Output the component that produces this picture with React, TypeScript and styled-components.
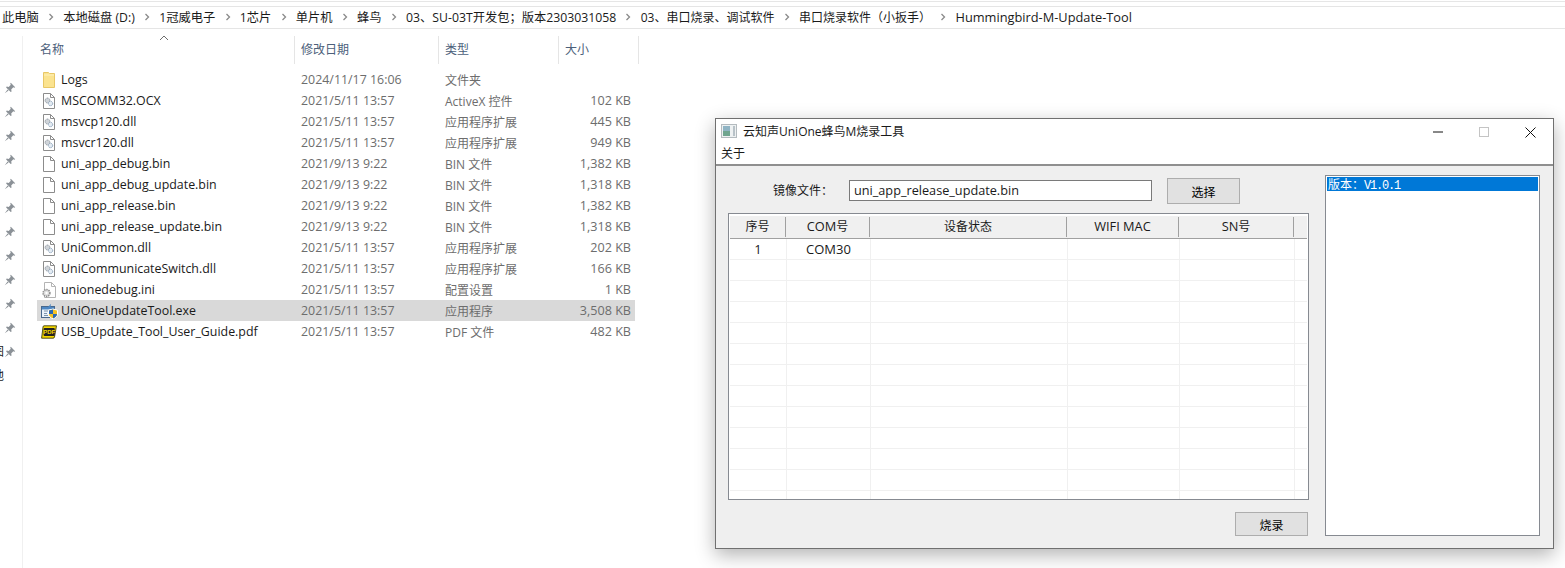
import React from "react";
import styled, { createGlobalStyle } from "styled-components";

const Global = createGlobalStyle`
  html, body { margin: 0; padding: 0; background: #fff; overflow: hidden; }
  body { font-family: "Open Sans", "Noto Sans CJK SC", sans-serif; font-size: 12px; color: #1a1a1a; }
  * { box-sizing: border-box; }
`;

const Page = styled.div`
  position: relative;
  width: 1565px;
  height: 568px;
  overflow: hidden;
`;

const TopEdge = styled.div`
  height: 6px;
  border-top: 1px solid #fff;
  box-shadow: inset 0 2px 0 -1px #e6e6e6;
`;

const Address = styled.nav`
  height: 23px;
  display: flex;
  align-items: center;
  gap: 9.25px;
  padding: 0 0 2px 2px;
  border-top: 1px solid #e5e5e5;
  border-bottom: 1px solid #e5e5e5;
  white-space: nowrap;
  color: #1a1a1a;
`;

const Crumb = styled.span<{ $size: number }>`
  font-size: ${(p) => p.$size}px;
`;

const Main = styled.div`
  display: flex;
  margin-top: 7px;
  height: 532px;
`;

const Sidebar = styled.aside`
  position: relative;
  width: 23px;
  flex: none;
  border-right: 1px solid #f0f0f0;
  padding: 46px 0 0 4px;
  display: flex;
  flex-direction: column;
  gap: 12px;
  overflow: hidden;
`;

const ClippedLabel = styled.span<{ $top: number }>`
  position: absolute;
  left: -8px;
  top: ${(p) => p.$top}px;
  font-size: 12px;
  line-height: 14px;
  color: #1a1a1a;
`;

const Files = styled.section`
  padding-left: 14px;
`;

const HeaderRow = styled.div`
  display: flex;
  height: 28px;
  margin-bottom: 5px;
  position: relative;
`;

const HeaderCell = styled.div<{ $w: number }>`
  width: ${(p) => p.$w}px;
  flex: none;
  display: flex;
  align-items: center;
  padding: 0 0 2px 6px;
  border-right: 1px solid #e5e5e5;
  color: #4c607a;
`;

const HeaderName = styled.span`
  margin-left: -3px;
`;

const SortCaret = styled.svg`
  position: absolute;
  left: 122px;
  top: -1px;
`;

const FileRow = styled.div<{ $selected?: boolean }>`
  display: flex;
  align-items: center;
  height: 21px;
  width: 598px;
  background: ${(p) => (p.$selected ? "#d9d9d9" : "transparent")};
  white-space: nowrap;
`;

const IconSlot = styled.span`
  width: 24px;
  flex: none;
  display: flex;
  justify-content: flex-start;
  padding-left: 4px;
`;

const NameCell = styled.span`
  width: 240px;
  flex: none;
  color: #1a1a1a;
  font-size: 12.4px;
`;

const MetaCell = styled.span<{ $w: number; $size: number }>`
  width: ${(p) => p.$w}px;
  flex: none;
  color: #6d6d6d;
  font-size: ${(p) => p.$size}px;
`;

const SizeCell = styled.span`
  width: 66px;
  flex: none;
  text-align: right;
  color: #6d6d6d;
  font-size: 12.6px;
`;

const Win = styled.div`
  position: absolute;
  left: 715px;
  top: 118px;
  width: 839px;
  height: 431px;
  border: 1px solid #707070;
  background: #efefef;
  box-shadow: 0 6px 18px rgba(0, 0, 0, 0.3);
  font-family: "Noto Sans CJK SC", "Open Sans", sans-serif;
  display: flex;
  flex-direction: column;
`;

const Chrome = styled.header`
  height: 47px;
  flex: none;
  background: #fff;
  border-bottom: 2px solid #8f8f8f;
`;

const TitleBar = styled.div`
  height: 24px;
  display: flex;
  align-items: center;
  padding-left: 5px;
  gap: 6px;
  color: #1a1a1a;
`;

const TitleText = styled.span`
  flex: 1;
  font-size: 12px;
  font-family: "Open Sans", "Noto Sans CJK SC", sans-serif;
`;

const CaptionGroup = styled.div`
  display: flex;
  margin-top: 2px;
`;

const CaptionBtn = styled.span`
  width: 46px;
  height: 24px;
  display: flex;
  align-items: center;
  justify-content: center;
`;

const MenuBar = styled.div`
  height: 21px;
  padding: 0 5px;
  font-size: 12px;
  line-height: 19px;
`;

const Body = styled.div`
  flex: 1;
  display: flex;
  gap: 16px;
  padding: 9px 13px 12px 12px;
`;

const LeftCol = styled.div`
  width: 581px;
  flex: none;
  display: flex;
  flex-direction: column;
  padding-top: 3px;
`;

const FilePicker = styled.div`
  display: flex;
  align-items: flex-start;
  height: 26px;
  padding-left: 45px;
`;

const PickerLabel = styled.label`
  width: 76px;
  flex: none;
  font-size: 12px;
  line-height: 24px;
`;

const PathField = styled.div`
  width: 303px;
  height: 21px;
  margin-top: 2px;
  flex: none;
  background: #fff;
  border: 1px solid #7a7a7a;
  padding-left: 4px;
  line-height: 18px;
  font-size: 12.7px;
  font-family: "Open Sans", "Noto Sans CJK SC", sans-serif;
`;

const ActionButton = styled.button<{ $h: number }>`
  width: 73px;
  height: ${(p) => p.$h}px;
  flex: none;
  background: #e1e1e1;
  border: 1px solid #adadad;
  color: #000;
  font: 12px "Noto Sans CJK SC", sans-serif;
  padding: 0;
`;

const PickButton = styled(ActionButton)`
  margin-left: 15px;
`;

const BurnRow = styled.div`
  display: flex;
  justify-content: flex-end;
  margin-top: 12px;
  padding-right: 1px;
`;

const Table = styled.div`
  height: 287px;
  margin-top: 9px;
  border: 1px solid #868a91;
  background: #fff;
  overflow: hidden;
  padding: 2px 1px 0;
`;

const THead = styled.div`
  display: flex;
  height: 23px;
  width: 577px;
  background: #f0f0f0;
  border-bottom: 1px solid #a0a0a0;
`;

const TH = styled.div<{ $w: number; $last?: boolean }>`
  width: ${(p) => p.$w}px;
  flex: none;
  height: 20px;
  margin-top: 1px;
  padding-bottom: 3px;
  display: flex;
  align-items: center;
  justify-content: center;
  font-size: 12px;
  border-right: ${(p) => (p.$last ? "0" : "1px solid #a0a0a0")};
`;

const LatinHead = styled.span`
  font-family: "Open Sans", sans-serif;
  font-size: 12.8px;
`;

const TRow = styled.div`
  display: flex;
  height: 21px;
  width: 577px;
  border-bottom: 1px solid #f0f0f0;
`;

const TD = styled.div<{ $w: number; $last?: boolean }>`
  width: ${(p) => p.$w}px;
  flex: none;
  display: flex;
  align-items: center;
  justify-content: center;
  font-size: 13px;
  font-family: "Open Sans", "Noto Sans CJK SC", sans-serif;
  border-right: ${(p) => (p.$last ? "0" : "1px solid #f0f0f0")};
`;

const VersionList = styled.div`
  width: 215px;
  flex: none;
  background: #fff;
  border: 1px solid #868a91;
  padding: 1px;
`;

const VersionItem = styled.div`
  height: 14px;
  background: #0078d7;
  color: #fff;
  font-size: 12px;
  line-height: 14px;
  padding-left: 1px;
  font-family: "Noto Sans CJK SC", monospace;
`;

const VersionNumber = styled.span`
  font-family: "Liberation Mono", monospace;
  letter-spacing: -1.2px;
`;

const Chevron = () => (
  <svg width="6" height="8" viewBox="0 0 6 8" style={{ flex: "none" }}>
    <path d="M1.5 1 L4.5 4 L1.5 7" fill="none" stroke="#8a8a8a" strokeWidth="1.3" />
  </svg>
);

const Pin = () => (
  <svg width="12" height="12" viewBox="0 0 12 12">
    <path d="M6.8 0.8 L11.2 5.2 L10.3 5.8 L9.3 5.2 L7.2 7.4 L7.6 9.4 L6.7 10 L2.1 5.4 L2.7 4.5 L4.7 4.9 L6.8 2.8 L6.2 1.7 Z M3.6 7.4 L0.8 11.2 L4.6 8.4 Z" fill="#8b9197" />
  </svg>
);

const PageOutline = ({ stroke = "#8c8c8c" }: { stroke?: string }) => (
  <path d="M1.5 .5 H8.5 L12.5 4.5 V15.5 H1.5 Z M8.5 .5 V4.5 H12.5" fill="#fff" stroke={stroke} strokeWidth="1" />
);

type IconKind = "folder" | "file" | "dll" | "ini" | "exe" | "pdf";

const FileIcon = ({ kind }: { kind: IconKind }) => {
  if (kind === "folder")
    return (
      <svg width="16" height="16" viewBox="0 0 16 16">
        <path d="M2.5 .5 H7.5 L8.5 1.5 H13.5 V15.5 H2.5 Z" fill="#fbe38f" stroke="#e8c766" />
        <path d="M3 2.5 H13 V3.5 H3 Z" fill="#fdf0bd" />
      </svg>
    );
  if (kind === "file")
    return (
      <svg width="16" height="16" viewBox="0 0 16 16">
        <g transform="translate(1 0)"><PageOutline /></g>
      </svg>
    );
  if (kind === "dll")
    return (
      <svg width="16" height="16" viewBox="0 0 16 16">
        <g transform="translate(1 0)"><PageOutline /></g>
        <circle cx="6.5" cy="7.5" r="2.4" fill="#cfd4d9" stroke="#8e969f" strokeDasharray="1.3 .6" />
        <circle cx="9.5" cy="10.5" r="2.2" fill="#e3ebf2" stroke="#8ba2ba" strokeDasharray="1.3 .6" />
      </svg>
    );
  if (kind === "ini")
    return (
      <svg width="16" height="16" viewBox="0 0 16 16">
        <g transform="translate(2 0)"><PageOutline stroke="#b4b4b4" /></g>
        <circle cx="5.5" cy="11" r="3.4" fill="#dcdcdc" stroke="#8f8f8f" strokeDasharray="1.4 .8" strokeWidth="1.6" />
        <circle cx="5.5" cy="11" r="1.2" fill="#fff" />
      </svg>
    );
  if (kind === "exe")
    return (
      <svg width="17" height="16" viewBox="0 0 17 16">
        <rect x=".5" y="3.5" width="13" height="11" fill="#eaf2fa" stroke="#48688c" />
        <rect x="1" y="4" width="12" height="2.5" fill="#4d87c4" />
        <path d="M3 8 H7 M3 10.5 H6 M3 12.5 H7" stroke="#7d94ab" />
        <path d="M7 4 L10 0.8 L9.5 4 Z" fill="#4d87c4" />
        <path d="M12 6 L16.5 7.2 V11 C16.5 13.4 14 15 12 15.8 C10 15 7.5 13.4 7.5 11 V7.2 Z" fill="#f5c324" stroke="#fff" />
        <path d="M12 6.5 V11 H8 V7.5 Z M12 11 H16 C16 13 14 14.6 12 15.4 Z" fill="#2a67b4" />
      </svg>
    );
  return (
    <svg width="16" height="14" viewBox="0 0 16 14">
      <path d="M3 .8 H15.5 L13.5 12 Q13.3 13.2 12 13.2 H.6 L2 2 Q2.1 .8 3 .8 Z" fill="#f5d800" stroke="#2a2a00" strokeWidth=".8" />
      <rect x="2.6" y="3" width="11.2" height="8" rx="1" fill="#222" />
      <text x="8.2" y="9.3" fontSize="6" fontWeight="700" fontFamily="Liberation Sans" textAnchor="middle" fill="#f5d800">PDF</text>
    </svg>
  );
};

type FileEntry = { name: string; date: string; type: string; size: string; icon: IconKind; selected?: boolean };

const files: FileEntry[] = [
  { name: "Logs", date: "2024/11/17 16:06", type: "文件夹", size: "", icon: "folder" },
  { name: "MSCOMM32.OCX", date: "2021/5/11 13:57", type: "ActiveX 控件", size: "102 KB", icon: "dll" },
  { name: "msvcp120.dll", date: "2021/5/11 13:57", type: "应用程序扩展", size: "445 KB", icon: "dll" },
  { name: "msvcr120.dll", date: "2021/5/11 13:57", type: "应用程序扩展", size: "949 KB", icon: "dll" },
  { name: "uni_app_debug.bin", date: "2021/9/13 9:22", type: "BIN 文件", size: "1,382 KB", icon: "file" },
  { name: "uni_app_debug_update.bin", date: "2021/9/13 9:22", type: "BIN 文件", size: "1,318 KB", icon: "file" },
  { name: "uni_app_release.bin", date: "2021/9/13 9:22", type: "BIN 文件", size: "1,382 KB", icon: "file" },
  { name: "uni_app_release_update.bin", date: "2021/9/13 9:22", type: "BIN 文件", size: "1,318 KB", icon: "file" },
  { name: "UniCommon.dll", date: "2021/5/11 13:57", type: "应用程序扩展", size: "202 KB", icon: "dll" },
  { name: "UniCommunicateSwitch.dll", date: "2021/5/11 13:57", type: "应用程序扩展", size: "166 KB", icon: "dll" },
  { name: "unionedebug.ini", date: "2021/5/11 13:57", type: "配置设置", size: "1 KB", icon: "ini" },
  { name: "UniOneUpdateTool.exe", date: "2021/5/11 13:57", type: "应用程序", size: "3,508 KB", icon: "exe", selected: true },
  { name: "USB_Update_Tool_User_Guide.pdf", date: "2021/5/11 13:57", type: "PDF 文件", size: "482 KB", icon: "pdf" },
];

const crumbs = [
  { text: "此电脑", size: 12.25 },
  { text: "本地磁盘 (D:)", size: 12.25 },
  { text: "1冠威电子", size: 12.25 },
  { text: "1芯片", size: 12.25 },
  { text: "单片机", size: 12.25 },
  { text: "蜂鸟", size: 12.25 },
  { text: "03、SU-03T开发包；版本2303031058", size: 12.25 },
  { text: "03、串口烧录、调试软件", size: 12 },
  { text: "串口烧录软件（小扳手）", size: 12 },
  { text: "Hummingbird-M-Update-Tool", size: 12.8 },
];

const heads: { label: React.ReactNode; w: number }[] = [
  { label: "序号", w: 56 },
  { label: <><LatinHead>COM</LatinHead>号</>, w: 84 },
  { label: "设备状态", w: 197 },
  { label: <LatinHead>WIFI MAC</LatinHead>, w: 112 },
  { label: <><LatinHead>SN</LatinHead>号</>, w: 115 },
  { label: "", w: 13 },
];

const cols = [57, 84, 197, 112, 115, 12];
const tableRows = Array.from({ length: 13 }, (_, i) => (i === 0 ? ["1", "COM30"] : []));

export default function App() {
  return (
    <Page>
      <Global />
      <TopEdge />
      <Address>
        {crumbs.map((c, i) => (
          <React.Fragment key={c.text}>
            <Crumb $size={c.size}>{c.text}</Crumb>
            {i < crumbs.length - 1 && <Chevron />}
          </React.Fragment>
        ))}
      </Address>
      <Main>
        <Sidebar>
          {Array.from({ length: 12 }, (_, i) => (
            <Pin key={i} />
          ))}
          <ClippedLabel $top={309}>图</ClippedLabel>
          <ClippedLabel $top={333}>地</ClippedLabel>
        </Sidebar>
        <Files>
          <HeaderRow>
            <SortCaret width="10" height="6" viewBox="0 0 10 6">
              <path d="M1 5 L5 1 L9 5" fill="none" stroke="#6d6d6d" />
            </SortCaret>
            <HeaderCell $w={258}>
              <HeaderName>名称</HeaderName>
            </HeaderCell>
            <HeaderCell $w={144}>修改日期</HeaderCell>
            <HeaderCell $w={120}>类型</HeaderCell>
            <HeaderCell $w={80}>大小</HeaderCell>
          </HeaderRow>
          {files.map((f) => (
            <FileRow key={f.name} $selected={f.selected}>
              <IconSlot>
                <FileIcon kind={f.icon} />
              </IconSlot>
              <NameCell>{f.name}</NameCell>
              <MetaCell $w={144} $size={12.4}>{f.date}</MetaCell>
              <MetaCell $w={120} $size={12}>{f.type}</MetaCell>
              <SizeCell>{f.size}</SizeCell>
            </FileRow>
          ))}
        </Files>
      </Main>

      <Win>
        <Chrome>
          <TitleBar>
            <svg width="16" height="14" viewBox="0 0 16 14">
              <rect x=".5" y=".5" width="15" height="13" fill="#eef1f2" stroke="#b4bbbf" />
              <rect x="2" y="2" width="7" height="5" fill="#8fb4c4" />
              <rect x="2" y="7" width="7" height="5" fill="#6fa58f" />
              <rect x="12" y="2" width="2" height="10" fill="#b8c2c8" />
            </svg>
            <TitleText>云知声UniOne蜂鸟M烧录工具</TitleText>
            <CaptionGroup>
              <CaptionBtn>
                <svg width="10" height="2" viewBox="0 0 10 2"><path d="M0 1 H10" stroke="#111" /></svg>
              </CaptionBtn>
              <CaptionBtn>
                <svg width="10" height="10" viewBox="0 0 10 10"><rect x=".5" y=".5" width="9" height="9" fill="none" stroke="#c4c4c4" /></svg>
              </CaptionBtn>
              <CaptionBtn>
                <svg width="11" height="11" viewBox="0 0 11 11"><path d="M.5 .5 L10.5 10.5 M10.5 .5 L.5 10.5" stroke="#111" /></svg>
              </CaptionBtn>
            </CaptionGroup>
          </TitleBar>
          <MenuBar>关于</MenuBar>
        </Chrome>
        <Body>
          <LeftCol>
            <FilePicker>
              <PickerLabel>镜像文件：</PickerLabel>
              <PathField>uni_app_release_update.bin</PathField>
              <PickButton $h={26}>选择</PickButton>
            </FilePicker>
            <Table>
              <THead>
                {heads.map((h, i) => (
                  <TH key={i} $w={h.w} $last={i === heads.length - 1}>
                    {h.label}
                  </TH>
                ))}
              </THead>
              {tableRows.map((row, r) => (
                <TRow key={r}>
                  {cols.map((w, c) => (
                    <TD key={c} $w={w} $last={c === cols.length - 1}>
                      {row[c] ?? ""}
                    </TD>
                  ))}
                </TRow>
              ))}
            </Table>
            <BurnRow>
              <ActionButton $h={24}>烧录</ActionButton>
            </BurnRow>
          </LeftCol>
          <VersionList>
            <VersionItem>
              版本：<VersionNumber>V1.0.1</VersionNumber>
            </VersionItem>
          </VersionList>
        </Body>
      </Win>
    </Page>
  );
}
